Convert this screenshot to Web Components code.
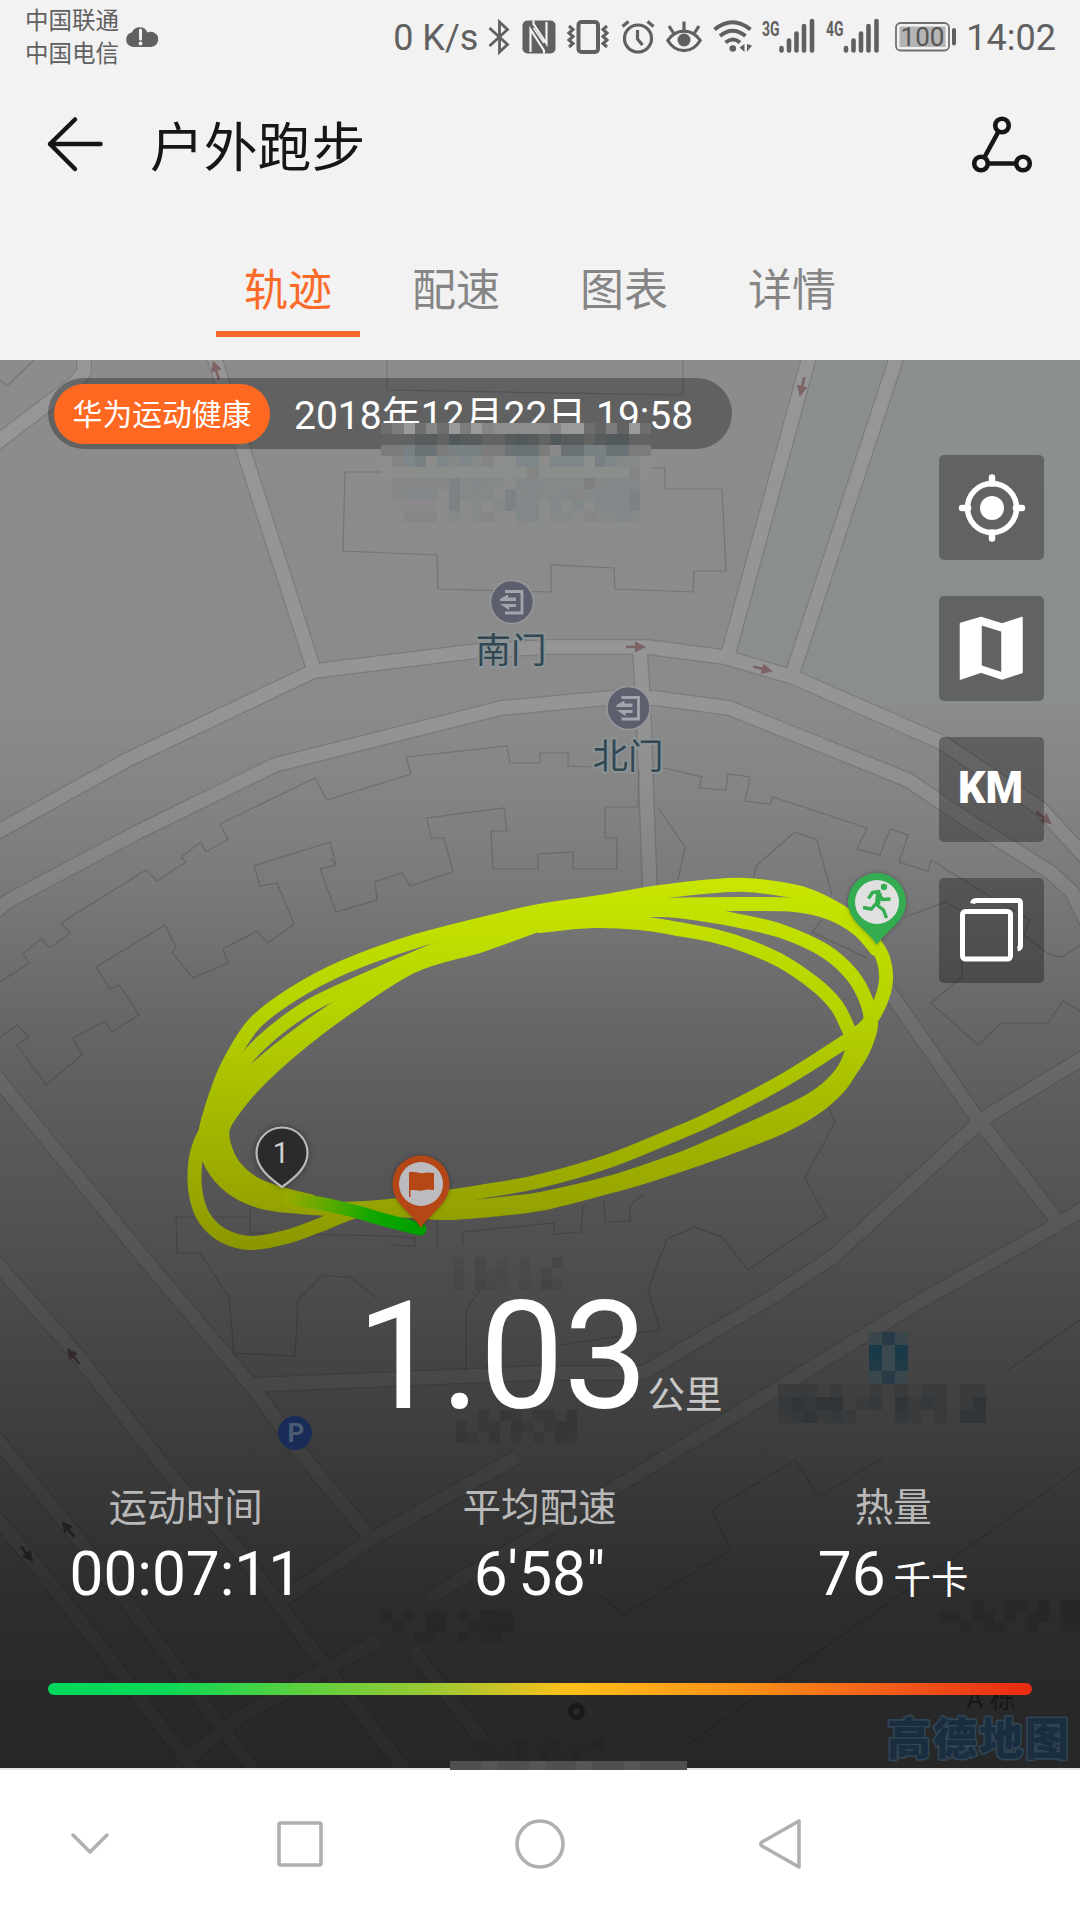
<!DOCTYPE html>
<html lang="zh-CN">
<head>
<meta charset="utf-8">
<title>户外跑步</title>
<style>
  html, body { margin: 0; padding: 0; background: #fff; }
  body { width: 1080px; height: 1920px; overflow: hidden; font-family: Roboto, "Noto Sans CJK SC", sans-serif; }
</style>
</head>
<body>
<run-app></run-app>
<script>
const define = (name, html, setup) => customElements.define(name, class extends HTMLElement {
  constructor() {
    super();
    this.attachShadow({ mode: 'open' }).innerHTML = typeof html === 'function' ? '' : html;
  }
  connectedCallback() {
    if (typeof html === 'function') this.shadowRoot.innerHTML = html(this);
    if (setup) setup(this);
  }
});

/* ---------- status bar ---------- */
const bars = xs => xs.map((x, i) => `<path d="M${x} ${[29, 21.5, 14.5, 7, 2][i]}V31.5"/>`).join('');
const ICONS = {
  cloud: [34, 24, `<path fill="#606060" d="M8 23a7.500 7.500 0 0 1-1-14.800A8.500 8.500 0 0 1 22.500 8.500 7.600 7.600 0 1 1 26 23z"/><path d="M15.500 6v9" stroke="#f2f2f2" stroke-width="3" stroke-linecap="round"/><circle cx="15.500" cy="19.500" r="1.900" fill="#f2f2f2"/>`],
  bt: [22, 36, `<path d="M1.500 9 19.500 25.500 11.500 33V3L19.500 10.500 1.500 27" fill="none" stroke="#606060" stroke-width="2.800" stroke-linejoin="miter"/>`],
  nfc: [34, 36, `<rect x=".5" y="1.500" width="33" height="33" rx="5" fill="#606060"/><path d="M8.500 33V10.500L22 31.500V34.500M11.500 1.500V5L24.500 24.500V3" fill="none" stroke="#f2f2f2" stroke-width="2.200"/><path d="M11.500 9 22 24" stroke="#f2f2f2" stroke-width="1.500"/>`],
  vib: [42, 36, `<rect x="11.500" y="3" width="19.500" height="30" rx="3" fill="none" stroke="#606060" stroke-width="4"/><path d="M2 7l4 3.500-4 3.500 4 3.500-4 3.500 4 3.500-4 3.500M40 7l-4 3.500 4 3.500-4 3.500 4 3.500-4 3.500 4 3.500" fill="none" stroke="#606060" stroke-width="3"/>`],
  alarm: [34, 36, `<g fill="none" stroke="#606060" stroke-width="3.200"><circle cx="17" cy="19.500" r="13.500"/><path d="M16.500 11v9l5 6M1.500 7.500 7.500 2.500M32.500 7.500l-6-5"/></g>`],
  eye: [36, 36, `<g fill="none" stroke="#606060" stroke-width="3.200"><path d="M1.800 21.500C10 9 26 9 34.200 21.500 26 35 10 35 1.800 21.500z"/><path d="M18 2.500v9M3 7l4.500 7M33 7l-4.500 7"/></g><circle cx="18" cy="21" r="6.500" fill="#606060"/>`],
  wifi: [40, 36, `<g fill="none" stroke="#606060" stroke-width="4"><path d="M1.500 10.500Q19.500-4 37.500 10.500M7 17Q19.500 6.500 32.500 17M12.500 23.500Q20 17.500 27 23.500"/></g><circle cx="19.800" cy="29.500" r="3.300" fill="#606060"/><path d="M31.500 25v8l-5-4.500zM34 25v8l5-6.500z" fill="#606060"/>`],
  g3: [54, 36, `<text x="0" y="17" font-size="20.500" font-weight="700" textLength="17.500" lengthAdjust="spacingAndGlyphs" fill="#606060">3G</text><g stroke="#606060" stroke-width="4.600" stroke-linecap="round">${bars([19.5, 27, 34.500, 42, 50])}</g>`],
  g4: [54, 36, `<text x="0" y="17" font-size="20.500" font-weight="700" textLength="17.500" lengthAdjust="spacingAndGlyphs" fill="#606060">4G</text><g stroke="#606060" stroke-width="4.600" stroke-linecap="round">${bars([20, 27.500, 35, 42.500, 50.500])}</g>`],
  bat: [62, 36, `<rect x="1" y="4" width="53" height="27.500" rx="4.500" fill="none" stroke="#707070" stroke-width="1.800"/><rect x="4.500" y="7.500" width="46" height="20.500" fill="#b4b4b4"/><rect x="57" y="9" width="4" height="17.500" rx="2" fill="#606060"/><text x="27.500" y="27.300" font-size="26" text-anchor="middle" fill="#555">100</text>`],
};
define('status-icon', el => {
  const [w, h, body] = ICONS[el.getAttribute('name')];
  return `<style>:host{display:block;flex:none;width:${w}px;height:${h}px}svg{display:block;overflow:visible;font-family:Roboto,sans-serif}</style><svg width="${w}" height="${h}" viewBox="0 0 ${w} ${h}">${body}</svg>`;
});
define('status-bar', `<style>
  :host{display:flex;height:76px;box-sizing:border-box;padding:5px 24px 0 25px;color:#606060;align-items:flex-start}
  .car{font-size:23.500px;line-height:33px;width:96px;margin-right:4px;white-space:nowrap}
  .cloud{margin-top:19px}
  .r{margin-left:auto;display:flex;align-items:center;height:66px;font-size:36px;line-height:66px;white-space:nowrap}
  .r status-icon{margin-top:-3px}
</style>
<div class="car"><div>中国联通</div><div>中国电信</div></div><status-icon class="cloud" name="cloud"></status-icon>
<div class="r"><span style="margin-right:10px">0 K/s</span>
<status-icon name="bt" style="margin-right:12px"></status-icon><status-icon name="nfc" style="margin-right:11px"></status-icon><status-icon name="vib" style="margin-right:12px"></status-icon><status-icon name="alarm" style="margin-right:11px"></status-icon><status-icon name="eye" style="margin-right:11px"></status-icon><status-icon name="wifi" style="margin-right:9px"></status-icon><status-icon name="g3" style="margin-right:10px"></status-icon><status-icon name="g4" style="margin-right:15px"></status-icon><status-icon name="bat" style="margin-right:9px"></status-icon><span>14:02</span></div>`);

/* ---------- title and tabs ---------- */
define('title-bar', `<style>
  :host{display:flex;height:140px;box-sizing:border-box;padding:0 44px;align-items:center;color:#161616}
  svg{display:block;flex:none}
  .back{margin-top:-4px}
  h1{margin:5px auto 0 44px;font-weight:400;font-size:53.800px;line-height:70px}
</style>
<svg class="back" width="62" height="60" viewBox="44 114 62 60" fill="none" stroke="#161616" stroke-width="4.500" stroke-linecap="round" stroke-linejoin="round"><path d="M50 144H100.500M75 119.500 50 144l25 25"/></svg>
<h1><slot></slot></h1>
<svg width="66" height="62" viewBox="970 114 66 62" fill="none" stroke="#161616" stroke-width="4.600"><circle cx="1002" cy="124.500" r="6.800"/><circle cx="981" cy="162.500" r="6.800"/><circle cx="1023" cy="162.500" r="6.800"/><path d="M998.500 130.500 984.300 156.500M988 162.500h28"/></svg>`);
define('tab-item', `<style>
  :host{display:flex;flex-direction:column;align-items:center;width:168px;color:#858585;font-size:44px;line-height:60px}
  i{width:144px;height:6px;margin-top:10px}
  :host([active]){color:#fa6a28}
  :host([active]) i{background:#f56a2c}
</style><span><slot></slot></span><i></i>`);
define('tab-strip', `<style>:host{display:flex;justify-content:center;height:144px;box-sizing:border-box;padding-top:45px}</style><slot></slot>`);

/* ---------- map ---------- */
const smooth = p => {
  let d = `M${p[0]}`;
  for (let i = 0; i < p.length - 1; i++) {
    const a = p[i - 1] || p[i], b = p[i], c = p[i + 1], e = p[i + 2] || c;
    const f = n => n.toFixed(1);
    d += `C${f(b[0] + (c[0] - a[0]) / 6)} ${f(b[1] + (c[1] - a[1]) / 6)} ${f(c[0] - (e[0] - b[0]) / 6)} ${f(c[1] - (e[1] - b[1]) / 6)} ${c[0]} ${c[1]}`;
  }
  return d;
};
const pts = s => s.trim().split(/\s+/).map(q => q.split(',').map(Number));
const ROADS = [
  'M84 350V372L74 384L-8 446', 'M212 350L243 449L314 670',
  'M-8 835L127 760L314 671L477 651L547 647H647L724 657L793 677L941 742L1040 808L1088 860',
  'M-8 914L10 900L138 832L275 765L501 708L609 698H654L729 708L908 780L970 822L1050 872L1072 892L1088 925',
  'M811 350L728 655', 'M899 350L792 675', 'M640 650L643 700L650 892',
  'M-8 1072L148 1263L255 1390L296 1447L372 1540', 'M251 1385L540 1373L643 1373L767 1300L833 1257L984 1118L1088 1055',
  'M-8 1258L79 1357L172 1477L241 1553L303 1637L406 1772', 'M-8 1434L69 1527L148 1630L255 1772',
  'M-8 1513L28 1555L93 1637L196 1772', 'M517 1457L375 1537L282 1600', 'M1088 1206L1057 1225L922 1300L764 1397L623 1483L540 1533L430 1597',
  'M885 985L977 1118L1057 1220', 'M413 1650L482 1740', 'M186 1760L238 1718L379 1640'
];
const BUILDINGS = [
  '34,360 7,386 0,380', '381,472 345,472 343,551 437,555 438,589 551,592 551,565 614,568 615,589 693,592 694,571 726,571 722,489 665,489 665,468 651,468',
  '387,360 387,390 683,395 683,360',
  '593,767 568,766 568,753 540,753 540,763 510,763 507,746 406,757 411,774 327,800 315,778 220,824 228,839 206,852 201,842 181,857 186,862 157,881 146,870 61,923 70,933 50,948 41,939 23,954 29,963 0,982',
  '639,770 638,807 605,807 605,838 617,838 617,869 573,869 573,852 538,854 538,869 493,869 491,831 507,831 504,808 427,818 431,838 444,838 453,872 410,886 402,873 375,882 377,900 336,912 320,869 336,865 330,842 254,866 260,886 277,883 294,924 268,943 257,931 223,949 228,963 193,978 172,953 176,947 165,925 96,967 110,989 119,985 139,1015 112,1032 105,1021 73,1038 82,1055 46,1085 17,1045 29,1037 17,1025 0,1037',
  '664,768 702,777 699,788 726,790 728,774 750,777 745,801 770,804 773,797 867,828 857,849 880,855 890,829 908,835 899,862 928,871 931,860 991,897 1030,920 1024,935 1050,955 1062,957 1080,945',
  '659,809 685,847 678,880', '753,880 757,865 795,832 817,840 832,895', '822,920 812,932 867,958',
  '905,917 946,902 962,912 962,977 931,1003 978,1045 1001,1023 1048,1023 1063,1001 1080,1011',
  '829,1108 835,1122 805,1178 826,1217 748,1270 722,1237 695,1227 667,1239 648,1290 660,1330 560,1345',
  '250,1208 250,1233 389,1236 415,1238 415,1246 389,1245', '250,1217 176,1217 177,1253 200,1253 229,1297 234,1353 295,1356 298,1300 322,1276 350,1277 377,1298',
  '437,1215 437,1250', '463,1245 463,1232 554,1223 554,1234 581,1232 583,1205', '604,1200 605,1222 630,1221 630,1205 643,1195',
  '466,1372 466,1310 480,1290', '1080,1320 1008,1370', '884,1457 819,1497 795,1460 712,1510 731,1550 623,1615 600,1595', '1080,1467 950,1560 778,1680 688,1745', '330,858 336,865'
];
const arrow = (x, y, a, c = '#7d6465') => `<g transform="translate(${x} ${y}) rotate(${a})"><path d="M-10 0H0" stroke="${c}" stroke-width="2.600"/><path d="M-1-5.500L10 0L-1 5.500z" fill="${c}"/></g>`;
const TRACKS = [
  '208,1120 205,1140 212,1165 232,1188 262,1202 300,1207 340,1209 400,1205 448,1197 480,1192 540,1181 609,1161 678,1133 712,1118 781,1082 843,1043 866,1026 880,1003 886,980 883,958 872,940 855,922 833,907 807,895 781,889 745,885 715,886 660,892 600,902 540,911 482,924 413,942 344,967 293,994 254,1024 229,1063 217,1092 208,1120',
  '540,917 592,909 660,905 740,904 795,905 830,913 858,929 876,949',
  '540,917 482,933 430,952 370,978 310,1006 262,1042 232,1078 218,1110 208,1140 210,1158 220,1175 242,1190',
  '540,922 600,912 660,910 700,914 735,920 781,931 825,951 852,975 866,1000 871,1025 863,1050 850,1071 838,1088 815,1108 781,1127 712,1154 643,1177 600,1189 540,1204 500,1209 440,1213 379,1208 350,1213 320,1225 286,1237 251,1243 224,1236 205,1219 196,1195 195,1165 201,1141 214,1118',
  '540,926 592,921 640,923 678,929 715,936 747,946 781,961 815,984 836,1005 848,1028 853,1043 846,1066 832,1084 811,1100 781,1115 712,1146 678,1160 609,1183 540,1199 500,1204 440,1210 370,1210',
  '540,924 482,945 413,966 344,1010 293,1049 256,1083 232,1112 223,1128 224,1145 234,1166 255,1184 285,1195 310,1201',
  '540,918 470,945 413,962 344,1003 290,1041 250,1075 228,1106 215,1130 216,1155 232,1180 262,1196 300,1203',
  '540,921 500,928 440,952 400,967 360,992'
];
define('map-canvas', () => `<style>:host{display:block}svg{display:block;font-family:Roboto,"Noto Sans CJK SC",sans-serif}</style>
<svg width="1080" height="1408" viewBox="0 360 1080 1408">
  <defs>
    <linearGradient id="shade" gradientUnits="userSpaceOnUse" x1="0" y1="360" x2="0" y2="1768">
      <stop offset="0" stop-color="#000" stop-opacity="0"/><stop offset=".25" stop-color="#000" stop-opacity=".01"/><stop offset=".31" stop-color="#000" stop-opacity=".06"/>
      <stop offset=".38" stop-color="#000" stop-opacity=".14"/><stop offset=".455" stop-color="#000" stop-opacity=".25"/><stop offset=".54" stop-color="#000" stop-opacity=".35"/>
      <stop offset=".64" stop-color="#000" stop-opacity=".44"/><stop offset=".74" stop-color="#000" stop-opacity=".54"/><stop offset=".81" stop-color="#000" stop-opacity=".61"/>
      <stop offset=".88" stop-color="#000" stop-opacity=".68"/><stop offset=".95" stop-color="#000" stop-opacity=".71"/><stop offset="1" stop-color="#000" stop-opacity=".72"/>
    </linearGradient>
    <linearGradient id="track" gradientUnits="userSpaceOnUse" x1="0" y1="880" x2="0" y2="1250">
      <stop offset="0" stop-color="#c8e600"/><stop offset=".35" stop-color="#b6d200"/><stop offset=".6" stop-color="#a6bc00"/><stop offset=".85" stop-color="#98a600"/><stop offset="1" stop-color="#8a9600"/>
    </linearGradient>
    <linearGradient id="fresh" gradientUnits="userSpaceOnUse" x1="285" y1="1197" x2="415" y2="1228">
      <stop offset="0" stop-color="#9aa900"/><stop offset=".35" stop-color="#58aa00"/><stop offset=".65" stop-color="#12a800"/><stop offset="1" stop-color="#00a000"/>
    </linearGradient>
  </defs>
  <rect y="360" width="1080" height="1408" fill="#8c8c8c"/>
  <path fill="#8b908e" d="M816 360H890L786 672 733 655zM903 360H1080V705H880L800 675z"/>
  <g fill="none" stroke="#7d7d7d" stroke-width="16" stroke-linejoin="round">${ROADS.map(d => `<path d="${d}"/>`).join('')}</g>
  <g fill="none" stroke="#969696" stroke-width="13.500" stroke-linejoin="round">${ROADS.map(d => `<path d="${d}"/>`).join('')}</g>
  <g fill="none" stroke="#757575" stroke-width="1.200">${BUILDINGS.map(p => `<polyline points="${p}"/>`).join('')}</g>
  ${arrow(216, 370, -108)}${arrow(802, 387, 103)}${arrow(636, 647, 0)}${arrow(763, 669, 14)}${arrow(1044, 818, 38)}
  ${arrow(73, 1356, -128, '#6a5557')}${arrow(68, 1529, -128, '#5c5454')}${arrow(27, 1554, 52, '#5c5454')}
  <rect y="360" width="1080" height="1408" fill="url(#shade)"/>
  <g id="gates">
    ${[[512, 602, 511, 663, '南门'], [628.5, 708, 628, 769, '北门']].map(([x, y, tx, ty, t]) => `
    <circle cx="${x}" cy="${y}" r="21.500" fill="#5d5f6e" stroke="#96999b" stroke-width="1.500"/>
    <path d="M${x - 7} ${y - 10.500}H${x + 10}V${y + 11}H${x - 7}" fill="none" stroke="#a2a5ac" stroke-width="2.800"/>
    <path d="M${x - 12} ${y - 3}L${x - 4} ${y - 7.500}V${y - 4.500}H${x + 4}V${y - 1}H${x - 12}zM${x - 12} ${y + 2}H${x + 4}V${y + 5}H${x - 3}V${y + 8}z" fill="#a2a5ac"/>
    <text x="${tx}" y="${ty}" font-size="35.500" text-anchor="middle" fill="#314853" stroke="#8b9395" stroke-width="4" stroke-linejoin="round" paint-order="stroke">${t}</text>`).join('')}
  </g>
  <circle cx="295" cy="1433" r="17" fill="#182c57"/><text x="296" y="1442" font-size="26" font-weight="700" text-anchor="middle" fill="#4b5b72">P</text>
  <g fill="none" stroke="url(#track)" stroke-width="14" stroke-linecap="round" stroke-linejoin="round">${TRACKS.map(t => `<path d="${smooth(pts(t))}"/>`).join('')}</g>
  <path d="${smooth(pts('289,1199 318,1203 350,1210 385,1220 420,1229'))}" fill="none" stroke="url(#fresh)" stroke-width="13" stroke-linecap="round"/>
  <g style="filter:drop-shadow(0 0 3px #0006)">
    <path d="M282 1187C268 1177 256.500 1167 256.500 1153A25.500 25.500 0 0 1 307.500 1153C307.500 1167 296 1177 282 1187z" fill="#2b2b2b" stroke="#b9b9b9" stroke-width="2.200"/>
  </g>
  <text x="281" y="1163" font-size="29" text-anchor="middle" fill="#d0d0d0">1</text>
  <g style="filter:drop-shadow(0 0 2px #0005)">
    <path d="M421 1228C412 1213 392.500 1204 392.500 1184A28.500 28.500 0 0 1 449.500 1184C449.500 1204 430 1213 421 1228z" fill="#b54716"/>
    <path d="M877 945C868 930 848 922 848 902A29 29 0 0 1 906 902C906 922 886 930 877 945z" fill="#33ad50"/>
  </g>
  <circle cx="421" cy="1184" r="22" fill="#bbbbc0"/>
  <path d="M409 1172.500c5-2 9 1.500 14 .5 4-.8 7-.8 11 0V1190c-5-1-8-.5-12 .5-4 .8-7-1-11.500-.3V1197h-1.500z" fill="#b54716"/>
  <circle cx="877" cy="902" r="22" fill="#dfe0df"/>
  <circle cx="884" cy="887" r="3.200" fill="#33ad50"/>
  <path d="M868.500 898.500L872.500 892.500 879 891.500 876.500 904.500 883.500 910 886.500 918M878.500 893.500L882.500 899.500 890.500 899M875.500 904L871.500 909 863 907.500" fill="none" stroke="#33ad50" stroke-width="3.400" stroke-linejoin="round"/>
  <path d="M876 892L882 893.500 880 904.500 875 905z" fill="#33ad50"/>
  <circle cx="576.500" cy="1711.500" r="6" fill="none" stroke="#191919" stroke-width="5"/>
  <text x="991" y="1708" font-size="26" text-anchor="middle" fill="#171717">A 栋</text>
  <text x="887" y="1754.500" font-size="44" font-weight="900" textLength="182" fill="#1a2e40" stroke="#304453" stroke-width="3.500" stroke-linejoin="round" paint-order="stroke">高德地图</text>
</svg>`);

/* Pixelated privacy patches, one tone letter per cell */
const TONES = { a: '#999a99', b: '#8c8d8c', c: '#858585', d: '#7c7c7c', e: '#6e6f6f', f: '#626464', g: '#575c5d', h: '#51595b', i: '#6b7275', j: '#798083', k: '#80878a', l: '#858988', m: '#8a8e8d', n: '#8b898c',
  p: '#454545', q: '#3f3f3f', r: '#494949', s: '#363636', t: '#323232', u: '#272727', v: '#242424', w: '#505050', x: '#565656', A: '#3a474b', B: '#2a3b48', C: '#1a3a49', D: '#3a484f', E: '#203b45', F: '#33383b', G: '#2f3437', H: '#383a3c', I: '#404040' };
const PATCHES = [
  [381, 423, 11.25, 11, 1, ['edaeceadacbbbbbcaaefdfae', 'fffggfhggffghgfhggfghhff', 'ddjiidjjjddiiidniijjiidd', 'bckjbklklcbmkkbkkkmjkllb', 'bbbmmmmmmmmmmcmmmmmmmmcb']],
  [381, 478, 11.25, 11, .75, ['.cccccjlkllmkklllldlkkk', '.ckkkmjlllmjlkllkclkkkj', '.nnnnmjmlmljkkmkmkmkkkj', '..cccblmlcbbkkmllmcllkl', '......mmmm..nmm.mmmmmm']],
  [453, 1257, 11, 11, .6, ['r.p.r.r..p', 'p.prp.r.p..', 'p.qpr.prqp']], [456, 1410, 11, 11, .6, ['..s.ts.ss.t', 's.ss.ts.stt', 'ts.t.s.s.ts']],
  [381, 1610, 11, 11, .6, ['u.u.uu.u.vuu', '.u..vv..uuvv', '...uu..u.uu.']], [928, 1600, 11, 11, .6, ['....u..uu.v.vv', '.uu.uu.u.uv.vv', '...u.uu..u..uu']],
  [472, 1739, 11, 11, .6, ['uu.uv.uv.uuv', '.uuuv.vuuv.']],
  [869, 1332, 13, 13, 1, ['ABA', 'CDC', 'EDE', 'ABA']], [778, 1384, 13, 13, .85, ['HHHIHIIHIHIHH.HH', 'FGFGGIHFIGHFH.HG', 'HFGHFHIIIFHIH.GG']],
  [450, 1761, 15.8, 9, 1, ['wwxwwxwwxwwxwww']],
];
define('pixel-patches', () => `<style>:host{display:block;pointer-events:none;overflow:visible}svg{display:block;overflow:visible}</style><svg width="1080" height="1408" viewBox="0 360 1080 1408" shape-rendering="crispEdges">${
  PATCHES.map(([x, y, w, h, o, rows]) => `<g opacity="${o}">` + rows.map((r, j) => [...r].map((c, i) => c === '.' ? '' : `<rect x="${x + i * w}" y="${y + j * h}" width="${w}" height="${h}" fill="${TONES[c]}"/>`).join('')).join('') + '</g>').join('')}</svg>`);

/* ---------- overlays on the map ---------- */
define('date-pill', `<style>
  :host{display:flex;align-items:center;width:684px;height:71px;box-sizing:border-box;padding-left:6px;border-radius:36px;background:rgba(0,0,0,.3);color:#fff}
  b{font-weight:400;background:#ff6820;height:60px;line-height:61.500px;width:216px;text-align:center;border-radius:30px;font-size:29.800px}
  span{margin:-4px 0 0 24px;font-size:39px;white-space:nowrap}
</style><b><slot name="source"></slot></b><span><slot></slot></span>`);
const TOOLS = {
  locate: '<g transform="translate(.5 -.5)"><circle cx="52.500" cy="53.500" r="24.500" fill="none" stroke="#fff" stroke-width="5.500"/><circle cx="52.500" cy="53.500" r="12" fill="#fff"/><path d="M52.500 23v6M52.500 78v6M22.500 53.500h6M76.500 53.500h6" stroke="#fff" stroke-width="6.500" stroke-linecap="round"/></g>',
  map: '<path fill="#fff" stroke="#fff" stroke-width="1.500" stroke-linejoin="round" fill-rule="evenodd" d="M21.500 27.500L42 21.500 63 28 83 21.500V76.500L63 83 42 76 21.500 83zM42 28.500V70L63 77V35z"/>',
  km: '<text x="51.500" y="66" text-anchor="middle" font-family="Roboto,sans-serif" font-weight="900" font-size="44" fill="#fff" textLength="65" lengthAdjust="spacingAndGlyphs">KM</text>',
  layers: '<g fill="none" stroke="#fff" stroke-width="5"><rect x="23.500" y="33.500" width="48" height="47.500" rx="3"/><path d="M33.500 25.500Q34 22.500 38 22.500H79Q81.500 22.500 81.500 25V67.500Q81.500 70.500 78.500 71"/></g>'
};
define('map-tool', el => `<style>:host{display:block;width:105px;height:105px;border-radius:5px;background:rgba(0,0,0,.3)}svg{display:block}</style><svg width="105" height="105" viewBox="0 0 105 105">${TOOLS[el.getAttribute('kind')]}</svg>`);
define('stat-cell', `<style>
  :host{display:flex;flex-direction:column;align-items:center;flex:1 1 0;color:#fff}
  .l{color:#b9b9b9;font-size:38.500px;line-height:56px}
  .v{font-size:60.300px;line-height:70px;margin-top:4px;display:flex;align-items:baseline;white-space:nowrap}
  ::slotted([slot=unit]){font-size:37.500px;margin-left:8px;transform:translateY(-2px)}
</style><div class="l"><slot name="label"></slot></div><div class="v"><slot></slot><slot name="unit"></slot></div>`);
define('run-summary', `<style>
  :host{display:block;color:#fff}
  .d{display:flex;align-items:baseline;justify-content:center;height:178px;line-height:178px;padding-right:1px}
  .n{font-size:150.500px;letter-spacing:-.6px}
  .u{font-size:37.500px;color:#c8c8c8}
  .s{display:flex;padding:0 10px 0 9px;margin-top:34px}
  .bar{height:12px;margin:66px 48px 0;border-radius:6px;background:linear-gradient(90deg,#00d95c 0,#0cd856 12%,#58d040 25%,#a0c832 40%,#fdbf1a 53%,#fb8c18 72%,#f0541a 88%,#e92912 100%)}
</style><div class="d"><span class="n">1.03</span><span class="u">公里</span></div>
<div class="s"><stat-cell><span slot="label">运动时间</span>00:07:11</stat-cell><stat-cell><span slot="label">平均配速</span>6'58"</stat-cell><stat-cell><span slot="label">热量</span>76<span slot="unit">千卡</span></stat-cell></div>
<div class="bar"></div>`);
define('run-map', `<style>
  :host{display:grid;height:1408px;grid-template:1408px / 1080px;position:relative;z-index:1}
  :host > *{grid-area:1/1}
  .ui{display:flex;flex-direction:column;position:relative}
  .top{padding:18px 0 0 48px}
  .tools{display:flex;flex-direction:column;gap:36px;align-items:flex-end;padding:6px 36px 0 0}
  run-summary{margin-top:285px}
  pixel-patches{position:relative}
</style>
<map-canvas></map-canvas>
<div class="ui"><div class="top"><date-pill><span slot="source">华为运动健康</span>2018年12月22日 19:58</date-pill></div>
<div class="tools"><map-tool kind="locate"></map-tool><map-tool kind="map"></map-tool><map-tool kind="km"></map-tool><map-tool kind="layers"></map-tool></div>
<run-summary></run-summary></div>
<pixel-patches></pixel-patches>`);

/* ---------- navigation bar ---------- */
define('nav-bar', `<style>:host{display:block;height:152px;box-sizing:border-box;border-top:2px solid #e4e4e4;background:#fff}
  div{display:flex;align-items:center;height:148px;padding-left:66px}svg{display:block}</style>
<div>
<svg width="48" height="56" viewBox="66 1816 48 56" fill="none" stroke="#b0b0b0" stroke-width="3.500" stroke-linecap="round" stroke-linejoin="round"><path d="M73 1835 90 1852 107 1835"/></svg>
<svg style="margin-left:157px" width="58" height="56" viewBox="271 1816 58 56" fill="none" stroke="#b0b0b0" stroke-width="3.600"><rect x="279" y="1823" width="42" height="42" rx="1.500"/></svg>
<svg style="margin-left:181px" width="60" height="56" viewBox="510 1816 60 56" fill="none" stroke="#b0b0b0" stroke-width="3.600"><circle cx="540" cy="1844" r="23"/></svg>
<svg style="margin-left:185px" width="50" height="56" viewBox="755 1816 50 56" fill="none" stroke="#b0b0b0" stroke-width="3.600" stroke-linejoin="round"><path d="M799 1821V1867L762 1846Q759.500 1844 762 1842z"/></svg>
</div>`);

define('run-app', `<style>
  :host{display:flex;flex-direction:column;width:1080px;height:1920px;background:#f2f2f2}
</style>
<status-bar></status-bar><title-bar>户外跑步</title-bar>
<tab-strip><tab-item active>轨迹</tab-item><tab-item>配速</tab-item><tab-item>图表</tab-item><tab-item>详情</tab-item></tab-strip>
<run-map></run-map><nav-bar></nav-bar>`);
</script>
</body>
</html>
